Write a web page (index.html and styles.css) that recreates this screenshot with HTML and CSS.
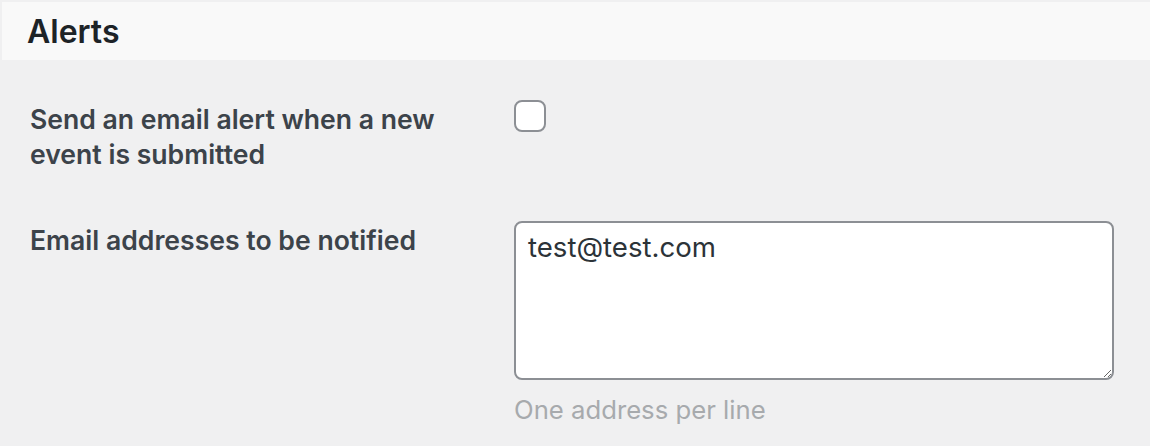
FILE: index.html
```html
<!DOCTYPE html>
<html>
<head>
	<title>Alerts</title>
	<meta charset="utf-8">
	<link rel="stylesheet" href="styles.css">
</head>
<body>
<div id="wrap">
	<div class="panelHead">
		<h2>Alerts</h2>
	</div>

	<div class="formRow first">
		<label class="rowLabel" for="sendAlert">Send an email alert when a new event is submitted</label>
		<div class="rowField">
			<input type="checkbox" id="sendAlert" class="check" />
		</div>
	</div>

	<div class="formRow">
		<label class="rowLabel" for="emails">Email addresses to be notified</label>
		<div class="rowField">
			<textarea id="emails" class="mailBox">test@test.com</textarea>
			<p class="hint">One address per line</p>
		</div>
	</div>
</div>
</body>
</html>
```

FILE: styles.css
```css
html,body{
	padding: 0;
	margin: 0;
	height:100%;
}

body{
	background-color: #f0f0f1;
	font-family: Inter, "Liberation Sans", sans-serif;
	color:#3c434a;
}

#wrap{
	padding: 2px 0 0 2px;
}

.panelHead{
	background-color: #f9f9f9;
	height: 58px;
	display: flex;
	align-items: center;
	padding-left: 25px;
}
.panelHead h2{
	margin: 0;
	font-size: 32px;
	font-weight: 600;
	color:#1d2327;
}

.formRow{
	display: flex;
	padding-top: 49px;
}
.formRow.first{
	padding-top: 40px;
}

.rowLabel{
	flex: 0 0 512px;
	padding: 2px 70px 0 28px;
	box-sizing: border-box;
	font-size: 26.6px;
	font-weight: 600;
	line-height: 35px;
	color:#3c434a;
}

.rowField{
	display: flex;
	flex-direction: column;
}

.check{
	appearance: none;
	-webkit-appearance: none;
	margin: 0;
	width: 32px;
	height: 32px;
	border: 2px solid #8c8f94;
	border-radius: 8px;
	background-color: #fff;
}

.mailBox{
	width: 600px;
	height: 159px;
	box-sizing: border-box;
	border: 2px solid #8c8f94;
	border-radius: 8px;
	padding: 6px 12px;
	font-family: Inter, "Liberation Sans", sans-serif;
	font-size: 27.6px;
	line-height: 36px;
	color:#2c3338;
	background-color: #fff;
	resize: vertical;
}

.hint{
	margin: 14px 0 0;
	font-size: 25.7px;
	color:#a7aaad;
}
```
